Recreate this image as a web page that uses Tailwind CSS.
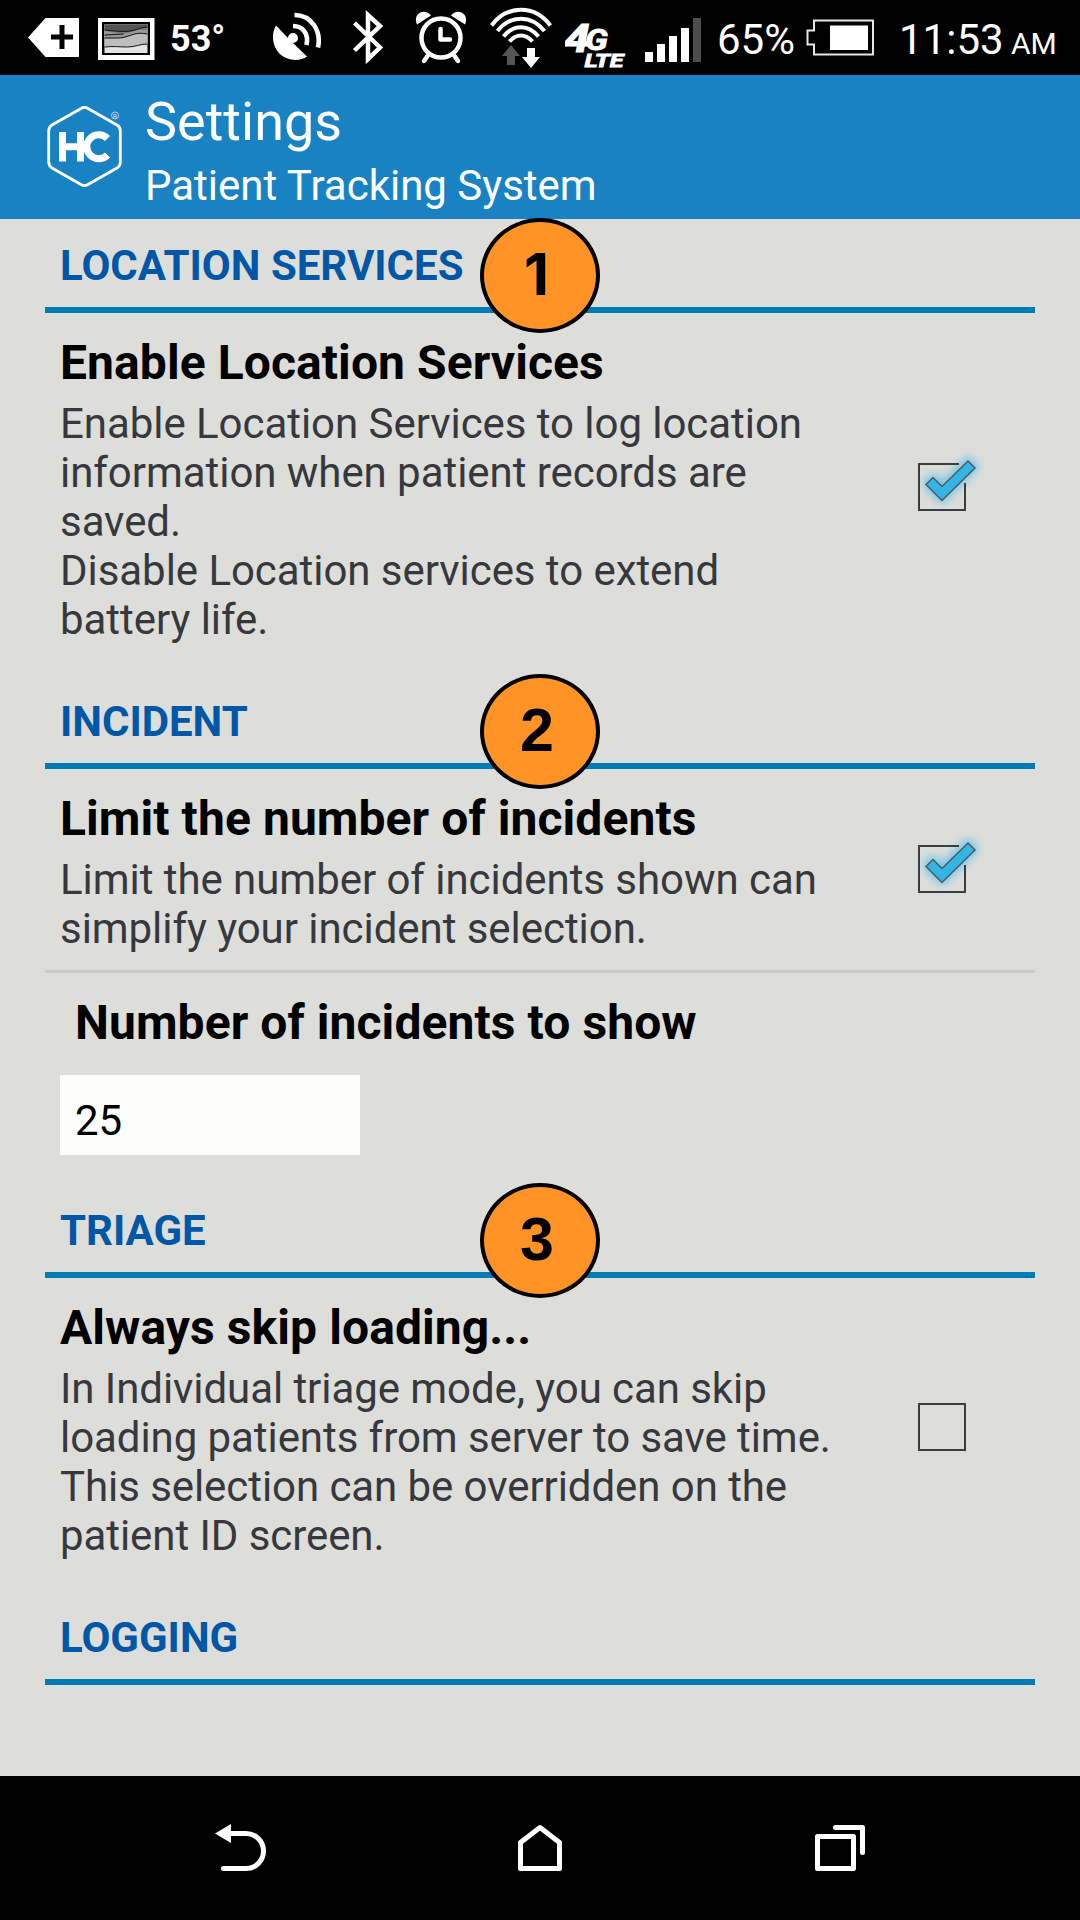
<!DOCTYPE html>
<html lang="en">
<head>
<meta charset="utf-8">
<title>Settings</title>
<script src="https://cdn.jsdelivr.net/npm/@tailwindcss/browser@4"></script>
</head>
<body class="bg-[#dddeda] font-['Roboto',sans-serif] w-[1080px] h-[1920px] overflow-hidden flex flex-col">
<div class="bg-black h-[75px] shrink-0 flex text-white whitespace-nowrap">
  <svg class="ml-7 shrink-0" width="51" height="75" viewBox="28 0 51 75"><path d="M28 37.500L45.500 18H79V57H45.500Z" fill="#fff"/><path d="M59.500 25h5v9.500H73v5h-8.500V49h-5v-9.500H51v-5h8.500z" fill="#000"/></svg>
  <svg class="ml-[19px] shrink-0" width="57" height="75" viewBox="98 0 57 75"><path d="M98 18h56.500v42H98z" fill="#fff"/><path d="M102 22h48v33h-48z" fill="#000"/><path d="M104.500 24.500h43V53h-43z" fill="#e4e4e4"/><path d="M104.500 24.500h43V44c-8 0-12 3-20 3s-14-1-23 0z" fill="#bdbdbd"/><path d="M104.500 24.500h43V34c-6-1-9-1-13 0s-10 4-16 4h-14z" fill="#999"/><path d="M104.500 24.500h43V30h-10c-4 1-8 3-14 4l-19-3z" fill="#7a7a7a"/><path d="M104.500 24.500h43V27c-10 1-10 3-17 4s-17 0-26-1z" fill="#555"/><path d="M147.500 44c-8 0-12 3-20 3s-14-1-23 0M147.500 34c-6-1-9-1-13 0s-10 4-16 4h-14M123.500 34l-19 1M147.500 27c-10 1-10 3-17 4s-17 0-26-1" fill="none" stroke="#111"/></svg>
  <span class="ml-[15px] w-[103px] text-[36px] font-bold leading-[79px]">53°</span>
  <svg class="shrink-0" width="48" height="75" viewBox="273 0 48 75"><path d="M276 25.500C269 38 275 52 284 57c8 4 17 4 23-.5L293 43a5 5 0 1 0-5-5z" fill="#fff"/><g fill="none" stroke="#fff" stroke-width="4.600"><path d="M293 26c10 0 16 8 13.500 19"/><path d="M294.500 15c17 0 27 16 23.500 32.500"/></g></svg>
  <svg class="ml-[31px] shrink-0" width="32" height="75" viewBox="352 0 32 75"><path d="M354.500 23L380 47.500 368 59V15L380 26 354.500 50.500" fill="none" stroke="#fff" stroke-width="4.500"/></svg>
  <svg class="ml-[31px] shrink-0" width="52" height="75" viewBox="415 0 52 75"><g fill="none" stroke="#fff" stroke-linecap="round" stroke-linejoin="round" stroke-width="4.500"><circle cx="441" cy="38" r="19.500"/><path d="M440.500 29v10.500H450M427.500 56l-3.500 5M454.500 56l3.500 5"/></g><path d="M417 24.500c-5-11 8-17 14-9zM465 24.500c5-11-8-17-14-9z" fill="#fff"/></svg>
  <svg class="ml-[23px] shrink-0" width="62" height="75" viewBox="490 0 62 75"><g fill="none" stroke="#fff" stroke-width="4"><path d="M491.500 25.500c16-21 43-21 59 0"/><path d="M497.500 31c13-16.500 34-16.500 47 0"/><path d="M503.500 36.500c10-12.500 25-12.500 35 0"/><path d="M509.500 41.500c7-8 16-8 23 0"/></g><path d="M511 45l9 11h-5v9h-8v-9h-5z" fill="#555"/><path d="M531 68l9-11h-5v-9h-8v9h-5z" fill="#fff"/></svg>
  <svg class="ml-[13px] shrink-0" width="62" height="75" viewBox="565 0 62 75" fill="#fff" stroke="#fff" font-weight="bold" font-style="italic"><text x="564" y="51.500" font-size="38" stroke-width="1.200" textLength="26" lengthAdjust="spacingAndGlyphs">4</text><text x="585" y="49.500" font-size="29" stroke-width=".8" textLength="23" lengthAdjust="spacingAndGlyphs">G</text><text x="584.500" y="66.500" font-size="17.500" stroke-width=".8" textLength="39" lengthAdjust="spacingAndGlyphs">LTE</text></svg>
  <svg class="ml-[18px] shrink-0" width="56" height="75" viewBox="645 0 56 75"><path d="M645 52h8v10h-8zM657 44h8v18h-8zM669 36h8v26h-8zM681 28h8v34h-8z" fill="#fff"/><path d="M693 18h8v44h-8z" fill="#4d4d4d"/></svg>
  <span class="ml-4 w-[89px] text-[42px] leading-[79px]">65%</span>
  <svg class="shrink-0" width="68" height="75" viewBox="806 0 68 75"><path d="M814 20.500h59v34h-59v-10h-6.500v-14h6.500z" fill="none" stroke="#e8e4e8" stroke-width="2"/><path d="M830 25.500h38v24.500h-38z" fill="#fff"/></svg>
  <span class="ml-[25px] w-[112px] text-[42px] leading-[79px]">11:53</span>
  <span class="text-[30px] leading-[87px]">AM</span>
</div>
<header class="bg-[#1982c2] h-36 shrink-0 flex text-white">
  <svg class="ml-[45px] shrink-0" width="80" height="144" viewBox="45 75 80 144"><path d="M81 108.500Q84.500 106.200 88 108.500L117 125Q120.300 127 120.300 131V162Q120.300 166 117 168L88 184.500Q84.500 186.800 81 184.500L52 168Q48.700 166 48.700 162V131Q48.700 127 52 125Z" fill="none" stroke="#fff" stroke-width="2.800"/><path d="M62.500 132v29.500M80.500 132v29.500M62.500 146.800h18" fill="none" stroke="#fff" stroke-width="7"/><path d="M107.500 138.500a12 12 0 1 0 0 16.500" fill="none" stroke="#fff" stroke-width="7"/><circle cx="115" cy="115.500" r="3.500" fill="none" stroke="#cfe4f2" stroke-width=".8"/><text x="113" y="117.800" font-size="6" fill="#e4f0f8">R</text></svg>
  <div class="ml-5 pt-[15px]">
    <h1 class="text-[54px] leading-[64px]">Settings</h1>
    <p class="text-[42px] leading-[49px] pt-[7px]">Patient Tracking System</p>
  </div>
</header>
<main class="h-[1557px] shrink-0 px-[45px] text-[42px] leading-[49px] text-[#36383d]">
  <section class="relative h-[456px]">
    <h2 class="pt-[22px] pb-[17px] px-[15px] border-b-6 border-[#007cb5] font-bold text-[#0057a7]">LOCATION SERVICES</h2>
    <div class="absolute left-[435px] top-[-1px] w-[120px] h-[115px] rounded-[50%] border-4 border-black bg-[#ff9326] text-black font-['Inter',sans-serif] font-bold text-[58px] leading-[105px] text-center pr-[7px]">1</div>
    <div class="flex pl-[15px]">
      <div class="w-[858px]"><h3 class="pt-[22px] pb-2 text-[48px] leading-14 font-bold tracking-[0.08px] text-black">Enable Location Services</h3>
      <p class="tracking-[-0.05px]">Enable Location Services to log location<br>information when patient records are<br>saved.<br>Disable Location services to extend<br>battery life.</p></div>
      <svg class="shrink-0 mt-[127px] overflow-visible" width="60" height="80" viewBox="918 440 60 80"><use href="#checked"/></svg>
    </div>
  </section>
  <section class="relative h-[509px]">
    <h2 class="pt-[22px] pb-[17px] px-[15px] border-b-6 border-[#007cb5] font-bold text-[#0057a7]">INCIDENT</h2>
    <div class="absolute left-[435px] top-[-1px] w-[120px] h-[115px] rounded-[50%] border-4 border-black bg-[#ff9326] text-black font-['Liberation_Sans',sans-serif] font-bold text-[61px] leading-[104px] text-center pr-[6px]">2</div>
    <div class="flex pl-[15px] h-[204px] border-b-3 border-[#cbcbcc]">
      <div class="w-[858px]"><h3 class="pt-[22px] pb-2 text-[48px] leading-14 font-bold tracking-[0.08px] text-black">Limit the number of incidents</h3>
      <p class="tracking-[-0.05px]">Limit the number of incidents shown can<br>simplify your incident selection.</p></div>
      <svg class="shrink-0 mt-[53px] overflow-visible" width="60" height="80" viewBox="918 440 60 80"><use href="#checked"/></svg>
    </div>
    <h3 class="pt-[22px] pl-[30px] text-[48px] leading-14 font-bold tracking-[0.08px] text-black">Number of incidents to show</h3>
    <div class="mt-6 ml-[15px] w-[300px] h-20 bg-[#fdfefc] pl-[15px] pt-[21px] text-black">25</div>
  </section>
  <section class="relative h-[407px]">
    <h2 class="pt-[22px] pb-[17px] px-[15px] border-b-6 border-[#007cb5] font-bold text-[#0057a7]">TRIAGE</h2>
    <div class="absolute left-[435px] top-[-1px] w-[120px] h-[115px] rounded-[50%] border-4 border-black bg-[#ff9326] text-black font-['Liberation_Sans',sans-serif] font-bold text-[61px] leading-[104px] text-center pr-[6px]">3</div>
    <div class="flex pl-[15px]">
      <div class="w-[858px]"><h3 class="pt-[22px] pb-2 text-[48px] leading-14 font-bold tracking-[0.08px] text-black">Always skip loading...</h3>
      <p class="tracking-[-0.07px]">In Individual triage mode, you can skip<br>loading patients from server to save time.<br>This selection can be overridden on the<br>patient ID screen.</p></div>
      <div class="mt-[125px] w-12 h-12 border-2 border-[#3a3d40]"></div>
    </div>
  </section>
  <section>
    <h2 class="pt-[22px] pb-[17px] px-[15px] border-b-6 border-[#007cb5] font-bold text-[#0057a7]">LOGGING</h2>
  </section>
</main>
<nav class="bg-black h-36 shrink-0 flex">
  <svg class="ml-[214px]" width="54" height="144" viewBox="214 1776 54 144"><path d="M229 1833.500h17a17.500 17.500 0 0 1 0 35H223.500" fill="none" stroke="#fff" stroke-width="5" stroke-linecap="round"/><path d="M215 1833.500l16-9.500v19z" fill="#fff"/></svg>
  <svg class="ml-[248px]" width="48" height="144" viewBox="516 1776 48 144"><path d="M520.500 1842.500L540 1827.500 559.500 1842.500V1868.500H520.500Z" fill="none" stroke="#fff" stroke-width="5" stroke-linejoin="round"/></svg>
  <svg class="ml-[250px]" width="52" height="144" viewBox="814 1776 52 144"><path d="M817.500 1836.500h36v32h-36zM835.500 1827.500h27v25" fill="none" stroke="#fff" stroke-width="5" stroke-linecap="round" stroke-linejoin="round"/></svg>
</nav>
<svg class="hidden"><defs>
  <filter id="glow" x="-50%" y="-50%" width="200%" height="200%"><feGaussianBlur stdDeviation="5"/></filter>
  <g id="checked"><path d="M926 484l7-7 9 9 26-26 7 7-33 33z" fill="#39b6ec" stroke="#39b6ec" stroke-width="6" opacity=".7" filter="url(#glow)"/><path d="M959 464H919V510H965V483" fill="none" stroke="#3a3d40" stroke-width="2"/><path d="M926 484.500l7-7 9 9 26-25.500 7 7-33 32.500z" fill="#33b5e5" stroke="#4d5a61" stroke-width="1.500"/></g>
</defs></svg>
</body>
</html>
